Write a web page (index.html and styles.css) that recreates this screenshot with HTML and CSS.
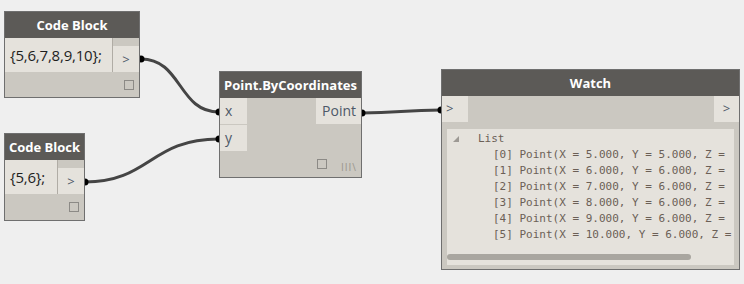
FILE: index.html
```html
<!DOCTYPE html>
<html lang="en">
<head>
    <meta charset="UTF-8">
    <title>Dynamo Graph</title>
    <link rel="stylesheet" href="styles.css">
</head>
<body>
    <div class="canvas">
        <svg class="wires" width="744" height="284">
            <path d="M141,59 C182,59 178,112 219,112" />
            <path d="M85,182 C150,182 150,139 219,139" />
            <path d="M362,113 C400,113 402,110 441,110" />
            <circle cx="141" cy="59" r="3.5" />
            <circle cx="219" cy="112" r="3.5" />
            <circle cx="85" cy="182" r="3.5" />
            <circle cx="219" cy="139" r="3.5" />
            <circle cx="362" cy="113" r="3.5" />
            <circle cx="441" cy="110" r="3.5" />
        </svg>

        <!-- first code block -->
        <div class="node code-node node-a">
            <div class="node-head">Code Block</div>
            <div class="node-row">
                <div class="code">{5,6,7,8,9,10};</div>
                <div class="out-col">
                    <div class="out-gap"></div>
                    <div class="port">&gt;</div>
                </div>
            </div>
            <div class="node-foot"><span class="chk"></span></div>
        </div>

        <!-- second code block -->
        <div class="node code-node node-b">
            <div class="node-head">Code Block</div>
            <div class="node-row">
                <div class="code">{5,6};</div>
                <div class="out-col">
                    <div class="out-gap"></div>
                    <div class="port">&gt;</div>
                </div>
            </div>
            <div class="node-foot"><span class="chk"></span></div>
        </div>

        <div class="node point-node">
            <div class="node-head">Point.ByCoordinates</div>
            <div class="node-row">
                <div class="ins">
                    <div class="port in-port">x</div>
                    <div class="port in-port">y</div>
                </div>
                <div class="port out-port">Point</div>
            </div>
            <div class="node-foot">
                <span class="chk"></span>
                <span class="lacing">III\</span>
            </div>
        </div>

        <div class="node watch-node">
            <div class="node-head">Watch</div>
            <div class="watch-ports">
                <div class="port sq">&gt;</div>
                <div class="port sq">&gt;</div>
            </div>
            <div class="watch-panel">
                <div class="tree">
                    <div class="tree-line"><span class="arrow"></span>List</div>
                    <div class="tree-line item">[0] Point(X = 5.000, Y = 5.000, Z =</div>
                    <div class="tree-line item">[1] Point(X = 6.000, Y = 6.000, Z =</div>
                    <div class="tree-line item">[2] Point(X = 7.000, Y = 6.000, Z =</div>
                    <div class="tree-line item">[3] Point(X = 8.000, Y = 6.000, Z =</div>
                    <div class="tree-line item">[4] Point(X = 9.000, Y = 6.000, Z =</div>
                    <div class="tree-line item">[5] Point(X = 10.000, Y = 6.000, Z =</div>
                </div>
                <div class="scroll"><div class="thumb"></div></div>
            </div>
        </div>
    </div>
</body>
</html>
```

FILE: styles.css
```css
body {
    margin: 0;
    background-color: #efefef;
    font-family: "Open Sans", Arial, sans-serif;
}
.canvas {
    position: relative;
    width: 744px;
    height: 284px;
    overflow: hidden;
}
.wires {
    position: absolute;
    left: 0;
    top: 0;
}
.wires path {
    fill: none;
    stroke: #454545;
    stroke-width: 3;
}
.wires circle {
    fill: #000;
}

/* nodes sit on the canvas at their own spot */
.node {
    position: absolute;
    background-color: #cbc8c1;
    border: 1px solid #6f6f6f;
    display: flex;
    flex-direction: column;
}
.node-head {
    height: 26px;
    background-color: #5c5a57;
    color: #fff;
    font-weight: bold;
    font-size: 13px;
    line-height: 26px;
    text-align: center;
}
.node-row {
    display: flex;
}
.node-foot {
    flex: 1;
    display: flex;
    align-items: center;
    justify-content: flex-end;
    padding-right: 6px;
}
.chk {
    width: 8px;
    height: 8px;
    border: 1px solid #8c8a86;
}

.node-a { left: 4px; top: 11px; width: 134px; height: 85px; }
.node-b { left: 4px; top: 133px; width: 79px; height: 86px; }
.point-node { left: 219px; top: 71px; width: 141px; height: 105px; }
.watch-node { left: 441px; top: 69px; width: 297px; height: 199px; }

.code {
    flex: 1;
    height: 34px;
    line-height: 34px;
    background-color: #e5e2dc;
    border-right: 1px solid #b0aca5;
    color: #1e1e1e;
    font-size: 15px;
    padding-left: 5px;
    letter-spacing: -0.2px;
    white-space: nowrap;
}
.out-col {
    width: 26px;
    display: flex;
    flex-direction: column;
}
.out-gap {
    height: 8px;
}
.port {
    background-color: #e5e2dc;
    color: #4d5868;
    font-size: 13px;
}
.out-col .port {
    flex: 1;
    line-height: 26px;
    text-align: center;
}
.node-a .node-foot, .node-b .node-foot { padding-right: 5px; }

.ins {
    width: 27px;
    display: flex;
    flex-direction: column;
    gap: 1px;
}
.in-port {
    height: 26px;
    line-height: 26px;
    padding-left: 5px;
    font-size: 14px;
}
.out-port {
    margin-left: auto;
    height: 26px;
    line-height: 26px;
    padding: 0 5px 0 6px;
    font-size: 14px;
    align-self: flex-start;
}
.point-node .node-foot {
    padding-right: 4px;
    gap: 14px;
}
.lacing {
    font-size: 10px;
    color: #9a958d;
    letter-spacing: 1px;
    margin-top: 6px;
}

.watch-ports {
    display: flex;
    justify-content: space-between;
}
.sq {
    width: 26px;
    height: 26px;
    line-height: 24px;
    padding-left: 4px;
    box-sizing: border-box;
}
.watch-ports .sq:last-child {
    width: 25px;
    text-align: center;
    padding-left: 0;
}
.watch-panel {
    margin: 7px 5px 4px 5px;
    flex: 1;
    background-color: #e5e2dc;
    overflow: hidden;
    display: flex;
    flex-direction: column;
}
.tree {
    flex: 1;
    padding-top: 2px;
    white-space: nowrap;
    font-family: "DejaVu Sans Mono", monospace;
    font-size: 11px;
    color: #6b5f56;
}
.tree-line {
    height: 16px;
    line-height: 16px;
    padding-left: 31px;
}
.tree-line.item {
    padding-left: 46px;
}
.arrow {
    display: inline-block;
    width: 0;
    height: 0;
    border-left: 6px solid transparent;
    border-bottom: 6px solid #9d9994;
    margin-left: -25px;
    margin-right: 19px;
}
.scroll {
    height: 11px;
}
.thumb {
    width: 244px;
    height: 6px;
    border-radius: 3px;
    background-color: #a9a6a0;
}
```
